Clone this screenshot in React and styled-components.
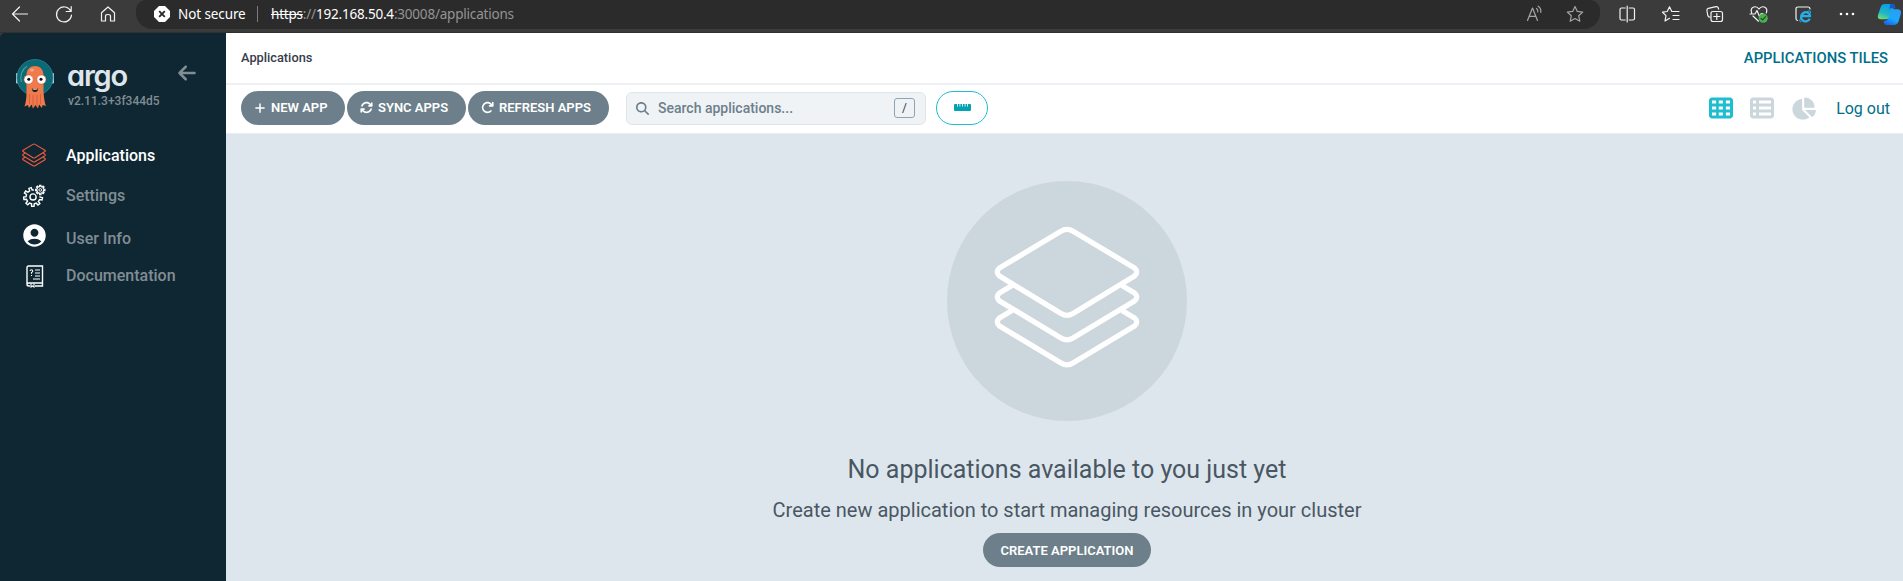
import React from 'react';
import styled, { createGlobalStyle, css } from 'styled-components';
import {
  FaArrowLeft, FaPlus, FaArrowsRotate, FaArrowRotateRight, FaMagnifyingGlass,
  FaRulerHorizontal, FaTableCells, FaTableList, FaChartPie,
} from 'react-icons/fa6';
import { MdAccountCircle } from 'react-icons/md';

const GlobalStyle = createGlobalStyle`
  *, *::before, *::after { box-sizing: border-box; }
  html, body { margin: 0; padding: 0; overflow: hidden; }
  body { font-family: Roboto, "Liberation Sans", sans-serif; background: #3b3b3b; }
  svg { display: block; flex: none; }
`;

const Window = styled.div`
  display: flex;
  flex-direction: column;
  width: 1903px;
  height: 581px;
  overflow: hidden;
  background: #3b3b3b;
`;

/* ---- browser toolbar ---- */
const BrowserBar = styled.header`
  display: flex;
  align-items: flex-start;
  height: 33px;
  flex: none;
  color: #f2f2f2;
  border-bottom: 1px solid #303030;
`;
const NavButtons = styled.div`
  display: flex;
  flex: none;
  width: 136px;
  height: 28px;
  padding-left: 10px;
  align-items: center;
  gap: 24px;
`;
const AddressBar = styled.div`
  display: flex;
  flex: none;
  align-items: center;
  width: 1464px;
  height: 29px;
  padding: 0 15px 1px 18px;
  background: #2b2b2b;
  border-radius: 10px 10px 16px 16px;
  font-family: "Noto Sans", "Open Sans", sans-serif;
  font-size: 13.5px;
  white-space: pre;
`;
const SecurityLabel = styled.span`
  margin-left: 8px;
  width: 79px;
  color: #fff;
  letter-spacing: -0.1px;
`;
const Separator = styled.span`
  width: 1px;
  height: 16px;
  margin-right: 13px;
  background: #7b7b7b;
`;
const Url = styled.span`
  flex: 1;
  color: #949494;
  letter-spacing: -0.2px;
  s, b { color: #fff; font-weight: 400; }
`;
const AddressActions = styled.div`
  display: flex;
  gap: 20px;
  color: #a5a5a5;
`;
const BrowserActions = styled.div`
  display: flex;
  flex: none;
  align-items: center;
  height: 28px;
  padding-left: 17px;
  gap: 24px;
`;
const CopilotIcon = styled.svg`
  margin-left: -4px;
`;

/* ---- page ---- */
const Page = styled.div`
  display: flex;
  flex: 1;
  min-height: 0;
  border-top-left-radius: 5px;
  overflow: hidden;
`;
const Sidebar = styled.aside`
  width: 226px;
  flex: none;
  background: #0f2733;
  color: #818d94;
`;
const Brand = styled.div`
  display: flex;
  height: 101px;
  padding: 25px 0 0 15px;
`;
const BrandText = styled.div`
  width: 110px;
  margin-left: 12px;
`;
const Wordmark = styled.div`
  height: 37px;
  padding-top: 4px;
  color: #dee6eb;
  font: 600 29px/28px Inter, sans-serif;
  font-feature-settings: "cv11";
  letter-spacing: -1.2px;
`;
const Version = styled.div`
  padding-left: 1px;
  font-size: 12px;
  font-weight: 500;
  line-height: 13px;
  white-space: nowrap;
`;
const CollapseButton = styled.div`
  padding-top: 5px;
`;
const NavItem = styled.a`
  display: flex;
  align-items: center;
  height: ${(p) => p.$height}px;
  padding-left: 22px;
  font-size: 16px;
  font-weight: 500;
  color: ${(p) => (p.$active ? '#fff' : '#818d94')};
`;
const NavIcon = styled.span`
  display: flex;
  justify-content: center;
  width: 24px;
  margin-right: 20px;
  color: #fff;
  ${(p) => p.$raised && css`padding-bottom: 5px;`}
  ${(p) => p.$lowered && css`padding: 3px 0 0 1px;`}
`;

const Main = styled.main`
  display: flex;
  flex-direction: column;
  flex: 1;
  min-width: 0;
`;
const TitleBar = styled.div`
  display: flex;
  align-items: center;
  justify-content: space-between;
  height: 52px;
  padding: 0 15px 1px 15px;
  background: #fff;
  border-bottom: 2px solid #edf1f5;
`;
const Crumb = styled.span`
  color: #363c4a;
  font-size: 12.8px;
  font-weight: 500;
`;
const PageTitle = styled.span`
  color: #006f8a;
  font-size: 14.8px;
  font-weight: 500;
`;
const Toolbar = styled.div`
  display: flex;
  align-items: center;
  height: 49px;
  padding: 0 13px 3px 15px;
  background: #fff;
  border-bottom: 1px solid #e8edf1;
`;
const Button = styled.button`
  display: flex;
  align-items: center;
  justify-content: ${(p) => (p.$centered ? 'center' : 'flex-start')};
  gap: 5px;
  width: ${(p) => p.$width}px;
  height: 34px;
  margin-right: ${(p) => (p.$centered ? 0 : 2)}px;
  padding: 0 0 0 ${(p) => (p.$centered ? 0 : 13)}px;
  border: 0;
  border-radius: 17px;
  background: #6d7f8b;
  color: #fff;
  font: 600 13px Roboto, sans-serif;
  white-space: nowrap;
`;
const SearchBox = styled.div`
  display: flex;
  align-items: center;
  width: 300px;
  height: 33px;
  margin: 1px 10px 0 15px;
  padding: 0 10px 0 9px;
  border: 1px solid #dee6eb;
  border-radius: 6px;
  background: #eff3f6;
  color: #6d7f8b;
`;
const Placeholder = styled.span`
  flex: 1;
  margin-left: 9px;
  font-size: 14px;
  font-weight: 500;
`;
const Key = styled.span`
  width: 21px;
  height: 20px;
  border: 1px solid #8fa4b1;
  border-radius: 3px;
  color: #363c4a;
  font-size: 12px;
  line-height: 18px;
  text-align: center;
`;
const OutlineButton = styled.button`
  display: flex;
  align-items: center;
  justify-content: center;
  width: 52px;
  height: 34px;
  padding: 0 0 1px;
  border: 1px solid #1fbdd0;
  border-radius: 17px;
  background: #fff;
  color: #00a2b3;
`;
const ViewModes = styled.div`
  display: flex;
  align-items: center;
  gap: 17px;
  margin-left: auto;
  padding-top: 1px;
  color: #ccd6dd;
`;
const LogOut = styled.a`
  margin-left: 3px;
  color: #006f8a;
  font-size: 16px;
`;
const EmptyState = styled.section`
  display: flex;
  flex-direction: column;
  align-items: center;
  flex: 1;
  padding: 47px 0 0 5px;
  background: #dee6ed;
  color: #495763;
`;
const IconDisc = styled.div`
  width: 240px;
  height: 240px;
  border-radius: 50%;
  background: #ccd6dd;
`;
const Heading = styled.h4`
  margin: 33px 0 0;
  font-size: 25px;
  font-weight: 400;
  line-height: 32px;
`;
const SubHeading = styled.h5`
  margin: 9px 0 8px;
  font-size: 20px;
  font-weight: 400;
  line-height: 30px;
`;

/* ---- drawings ---- */
const Thin = ({ w = 20, h = 20, sw = 1.2, children, ...rest }) => (
  <svg width={w} height={h} viewBox={`0 0 ${w} ${h}`} fill="none" stroke="currentColor"
    strokeWidth={sw} strokeLinecap="round" strokeLinejoin="round" {...rest}>{children}</svg>
);

const LayerStack = ({ size, color, stroke, box = '0 0 240 240' }) => (
  <svg width={size} height={size} viewBox={box} fill="none" stroke={color} strokeWidth={stroke} strokeLinejoin="round">
    <path d="M113.5 50.4Q120 46.4 126.5 50.4L187.5 87Q192 91 187.5 95L126 132.5Q120 136.3 114 132.5L52.5 95Q48 91 52.5 87Z" />
    <path d="M65 104.5L52.5 112Q48 116 52.5 120L114 157Q120 160.8 126 157L187.5 120Q192 116 187.5 112L175 104.5" />
    <path d="M65 129.5L52.5 137Q48 141 52.5 145L114 182Q120 185.8 126 182L187.5 145Q192 141 187.5 137L175 129.5" />
  </svg>
);

const Mascot = () => (
  <svg width="40" height="52" viewBox="0 0 40 52">
    <rect x="1" y="15" width="3" height="10.5" rx="1" fill="#b5cfdf" />
    <rect x="36" y="15" width="3" height="10.5" rx="1" fill="#b5cfdf" />
    <circle cx="20" cy="19.5" r="18" fill="#0b6a74" stroke="#28839a" strokeWidth="0.8" />
    <path d="M6.5 24A14 14 0 0 1 12 8" fill="none" stroke="#4b98a0" strokeWidth="1.2" />
    <path d="M11.5 17C11.5 5 28.5 5 28.5 17V34C29 41 30 46 31 48L27.5 47 27 50 24 46.5 23 50.5 20.5 47 18 50.5 16.5 46.5 14 50 12.8 47 9.5 48.5C11 44 11.5 40 11.5 34Z" fill="#ef7b4d" />
    <path d="M14.5 36V46M18 37V49M22 37V49M25.5 36V46" stroke="#d75b38" strokeWidth="0.9" />
    <ellipse cx="17" cy="12" rx="2.2" ry="1.6" fill="#f7a482" />
    <circle cx="13.6" cy="21.5" r="4.6" fill="#fff" stroke="#e3532f" strokeWidth="0.6" />
    <circle cx="26.4" cy="21.5" r="4.6" fill="#fff" stroke="#e3532f" strokeWidth="0.6" />
    <circle cx="13.8" cy="21.3" r="1.5" fill="#111" />
    <circle cx="26" cy="21.3" r="1.5" fill="#111" />
    <path d="M16.8 30.5Q20 31.5 23.2 30.5Q22.8 34 20 34Q17.2 34 16.8 30.5Z" fill="#16191c" />
    <path d="M17.6 30.9Q20 31.6 22.4 30.9V31.6Q20 32.3 17.6 31.6Z" fill="#fff" />
  </svg>
);

const gear = (cx, cy, inner, outer, teeth, from = 0) => {
  const step = (Math.PI * 2) / teeth;
  let d = '';
  for (let i = 0; i < teeth; i += 1) {
    [[-0.28, inner], [-0.18, outer], [0.18, outer], [0.28, inner]].forEach(([f, r]) => {
      const a = from + (i + f) * step;
      d += `${d ? 'L' : 'M'}${(cx + r * Math.cos(a)).toFixed(2)} ${(cy + r * Math.sin(a)).toFixed(2)}`;
    });
  }
  return `${d}Z`;
};
const Gears = () => (
  <svg width="23" height="23" viewBox="0 0 24 24" fill="none" stroke="#fff" strokeWidth="1.5">
    <path d={gear(10.5, 13.5, 7.3, 9.9, 9, 0.2)} />
    <circle cx="10.5" cy="13.5" r="3.2" />
    <path d={gear(18, 6.2, 3.6, 5.2, 8)} fill="#0f2733" stroke="#0f2733" strokeWidth="3" />
    <path d={gear(18, 6.2, 3.5, 4.9, 8)} strokeWidth="1.3" />
    <circle cx="18" cy="6.2" r="1.4" strokeWidth="1" />
  </svg>
);
const DocBook = () => (
  <svg width="18" height="23" viewBox="0 0 18 23" fill="none" stroke="#fff" strokeWidth="1.4">
    <path d="M1 19V2.5Q1 1 2.5 1H16.5V18H3Q1 18 1 19.5Q1 21 3 21H4M9 21H16.5V18" />
    <path d="M5 18.5V22L6.5 21L8 22V18.5" strokeWidth="1.1" />
    <path d="M4 6Q4.2 4.7 5.5 4.7T6.8 6.2Q6.5 7.2 5.5 7.6V8.7M5.5 10V11" strokeWidth="1.1" />
    <path d="M9 5H14M9 8H14M9 11H14M7 14H14" strokeWidth="1.2" />
  </svg>
);

const BrowserChrome = () => (
  <BrowserBar>
    <NavButtons>
      <Thin><path d="M17.5 10H2.5M9.5 3L2.5 10L9.5 17" /></Thin>
      <Thin><path d="M16.8 7.2A7.5 7.5 0 1 0 17.5 11M17.2 2.5V7.5H12.2" /></Thin>
      <Thin><path d="M3.5 8.8L10 3L16.5 8.8V17H12.5V12Q12.5 10.5 10 10.5T7.5 12V17H3.5Z" /></Thin>
    </NavButtons>
    <AddressBar>
      <svg width="16" height="16" viewBox="0 0 16 16">
        <path d="M5 0H11L16 5V11L11 16H5L0 11V5Z" fill="#fff" />
        <path d="M5.2 5.2L10.8 10.8M10.8 5.2L5.2 10.8" stroke="#2b2b2b" strokeWidth="1.9" />
      </svg>
      <SecurityLabel>Not secure</SecurityLabel>
      <Separator />
      <Url><s>https</s>://<b>192.168.50.4</b>:30008/applications</Url>
      <AddressActions>
        <Thin><path d="M2.5 16.5L7.5 4L12.5 16.5M4.2 12.3H10.8M11.5 4.5Q13 5.5 12.8 7.8M13.2 2.2Q16.3 4.3 15.8 8.3" /></Thin>
        <Thin><path d="M10 2.5L12.3 7.4L17.7 8.1L13.7 11.8L14.8 17.2L10 14.5L5.2 17.2L6.3 11.8L2.3 8.1L7.7 7.4Z" /></Thin>
      </AddressActions>
    </AddressBar>
    <BrowserActions>
      <Thin><path d="M8.2 4H4.5Q3 4 3 5.5V14.5Q3 16 4.5 16H8.2M12.2 4H16Q17.5 4 17.5 5.5V14.5Q17.5 16 16 16H12.2M10.2 2V18" /></Thin>
      <Thin><path d="M11.5 7.5H10.8L8.5 2.8L6.2 7.5L1.5 8.2L5 11.6L4 17L8.5 14.3M12 7.5H18M12 11.5H18M12 15.5H18" /></Thin>
      <Thin><path d="M4.8 13.2Q3.2 13.2 2.8 11.5L1.9 6.5Q1.7 4.8 3.3 4.4L11 2.6Q12.8 2.3 13.3 4L13.6 5.2M8 7.5H15.5Q17.5 7.5 17.5 9.5V15.5Q17.5 17.5 15.5 17.5H8Q6 17.5 6 15.5V9.5Q6 7.5 8 7.5ZM11.8 9.5V15.5M8.8 12.5H14.8" /></Thin>
      <Thin><path d="M2.7 9Q1 4.5 4.7 3Q8 2 10 5Q12 2 15.3 3Q19 4.5 17.3 9M1 10H6L8 6.5L10.5 12.5L12.2 9.5H14M4 12L9.5 17.2" />
        <circle cx="14.2" cy="14.2" r="4.6" fill="#4caf50" stroke="none" /><path d="M12 14.3L13.6 15.9L16.6 12.6" stroke="#234d25" />
      </Thin>
      <Thin><path d="M4.5 16.5Q3 16 3 14.5V5Q3 3 5 3H15Q17 3 17 5" />
        <path d="M16.8 14.8A4.6 4.6 0 1 1 17.2 12.2H8.5" stroke="#27aee8" strokeWidth="2.2" strokeLinecap="butt" />
        <path d="M8 17.8Q5 18.5 8.5 12.5Q13 6.5 17 7Q18.3 7.5 17.3 9.3" stroke="#27aee8" strokeWidth="1" />
      </Thin>
      <Thin stroke="none" fill="#fff"><circle cx="4" cy="10" r="1.3" /><circle cx="10" cy="10" r="1.3" /><circle cx="16" cy="10" r="1.3" /></Thin>
      <CopilotIcon width="25" height="23" viewBox="0 0 26 24">
        <defs>
          <linearGradient id="copilotA" x1="0.6" y1="0" x2="0.2" y2="1"><stop stopColor="#069ee8" /><stop offset=".6" stopColor="#23b6c4" /><stop offset="1" stopColor="#70df76" /></linearGradient>
          <linearGradient id="copilotB" x1="0.8" y1="0" x2="0.3" y2="1"><stop stopColor="#2b9cf2" /><stop offset=".6" stopColor="#1aa9ff" /><stop offset="1" stopColor="#1667ef" /></linearGradient>
        </defs>
        <path d="M8 1H16Q18.5 1 17.8 4L15 13Q13.5 17 10 17H4Q0 17 1 12.5L4 4Q5 1 8 1Z" fill="url(#copilotA)" />
        <path d="M14 1H16.5Q18.5 1 19.5 5.5H14.5Q13 5.5 12.5 7Z" fill="#1558c8" />
        <path d="M17 6.5H21Q26 6.5 24.8 11.5L22.5 19Q21.2 23 17.5 23H10Q7 23 7 18.5Q11 19 12.3 15L14 9Q15 6.5 17 6.5Z" fill="url(#copilotB)" />
      </CopilotIcon>
    </BrowserActions>
  </BrowserBar>
);

export default function App() {
  return (
    <Window>
      <GlobalStyle />
      <BrowserChrome />
      <Page>
        <Sidebar>
          <Brand>
            <Mascot />
            <BrandText>
              <Wordmark>argo</Wordmark>
              <Version>v2.11.3+3f344d5</Version>
            </BrandText>
            <CollapseButton><FaArrowLeft size={20} /></CollapseButton>
          </Brand>
          <nav>
            <NavItem $active $height={42}>
              <NavIcon><LayerStack size={24} color="#ef5b3c" stroke={7} box="46 42 148 148" /></NavIcon>
              Applications
            </NavItem>
            <NavItem $height={39}><NavIcon><Gears /></NavIcon>Settings</NavItem>
            <NavItem $height={46}><NavIcon $raised><MdAccountCircle size={27} /></NavIcon>User Info</NavItem>
            <NavItem $height={28}><NavIcon $lowered><DocBook /></NavIcon>Documentation</NavItem>
          </nav>
        </Sidebar>
        <Main>
          <TitleBar>
            <Crumb>Applications</Crumb>
            <PageTitle>APPLICATIONS TILES</PageTitle>
          </TitleBar>
          <Toolbar>
            <Button $width={104}><FaPlus size={12} />NEW APP</Button>
            <Button $width={119}><FaArrowsRotate size={13} />SYNC APPS</Button>
            <Button $width={141}><FaArrowRotateRight size={13} />REFRESH APPS</Button>
            <SearchBox>
              <FaMagnifyingGlass size={13} />
              <Placeholder>Search applications...</Placeholder>
              <Key>/</Key>
            </SearchBox>
            <OutlineButton><FaRulerHorizontal size={17} /></OutlineButton>
            <ViewModes>
              <FaTableCells size={24} color="#1fbdd0" />
              <FaTableList size={24} />
              <FaChartPie size={25} />
              <LogOut>Log out</LogOut>
            </ViewModes>
          </Toolbar>
          <EmptyState>
            <IconDisc><LayerStack size={240} color="#fff" stroke={5.3} /></IconDisc>
            <Heading>No applications available to you just yet</Heading>
            <SubHeading>Create new application to start managing resources in your cluster</SubHeading>
            <Button $width={168} $centered>CREATE APPLICATION</Button>
          </EmptyState>
        </Main>
      </Page>
    </Window>
  );
}
